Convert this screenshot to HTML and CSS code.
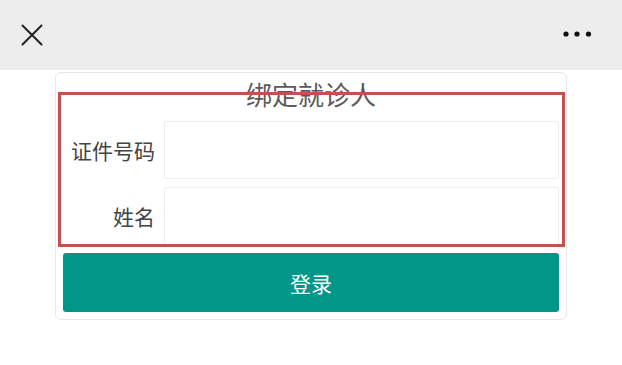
FILE: index.html
```html
<!DOCTYPE html>
<html lang="zh">
<head>
<meta charset="utf-8">
<title>绑定就诊人</title>
<link rel="stylesheet" href="styles.css">
</head>
<body>
<header class="topbar">
  <svg class="icon-close" width="24" height="24" viewBox="0 0 24 24"><path d="M2.5 2.5 L21.5 21.5 M21.5 2.5 L2.5 21.5" stroke="#222" stroke-width="2" fill="none" stroke-linecap="round"/></svg>
  <svg class="icon-more" width="30" height="8" viewBox="0 0 30 8"><circle cx="3" cy="4" r="2.6" fill="#111"/><circle cx="14" cy="4" r="2.6" fill="#111"/><circle cx="25.5" cy="4" r="2.6" fill="#111"/></svg>
</header>
<main class="card">
  <h1 class="title">绑定就诊人</h1>
  <div class="row">
    <label class="label">证件号码</label>
    <input class="field" type="text">
  </div>
  <div class="row">
    <label class="label">姓名</label>
    <input class="field" type="text">
  </div>
  <button class="btn">登录</button>
  <div class="highlight"></div>
</main>
</body>
</html>
```
FILE: styles.css
```css
html, body {
  margin: 0;
  padding: 0;
  background: #fff;
  font-family: "Noto Sans CJK SC", "Noto Sans", sans-serif;
}
.topbar {
  height: 70px;
  background: #ededed;
  display: flex;
  align-items: center;
  justify-content: space-between;
  padding: 0 29px 0 20px;
  box-sizing: border-box;
}
.icon-close { display: block; margin-top: -1px; }
.icon-more { display: block; margin-top: -2px; }
.card {
  position: relative;
  margin: 2px 0 0 55px;
  width: 512px;
  box-sizing: border-box;
  border: 1px solid #e8e8e8;
  border-radius: 6px;
  background: #fff;
  padding: 7px;
  display: flex;
  flex-direction: column;
  gap: 8px;
}
.title {
  margin: 0;
  font-size: 26px;
  line-height: 28px;
  font-weight: normal;
  color: #5a5a5a;
  text-align: center;
  height: 33px;
}
.row {
  display: flex;
  align-items: center;
  height: 58px;
}
.label {
  width: 101px;
  text-align: right;
  font-size: 21px;
  line-height: 24px;
  color: #444;
  padding-right: 9px;
  box-sizing: border-box;
  flex: none;
  white-space: nowrap;
}
.field {
  flex: 1;
  height: 58px;
  box-sizing: border-box;
  border: 1px solid #eee;
  border-radius: 2px;
  background: #fff;
  outline: none;
  margin: 0;
}
.btn {
  height: 59px;
  border: none;
  border-radius: 3px;
  background: #009688;
  color: #fff;
  font-family: inherit;
  font-size: 21px;
  margin: 0;
}
.highlight {
  position: absolute;
  left: 2px;
  top: 19px;
  width: 507px;
  height: 155px;
  box-sizing: border-box;
  border: 3px solid #c4504f;
  pointer-events: none;
}
```
